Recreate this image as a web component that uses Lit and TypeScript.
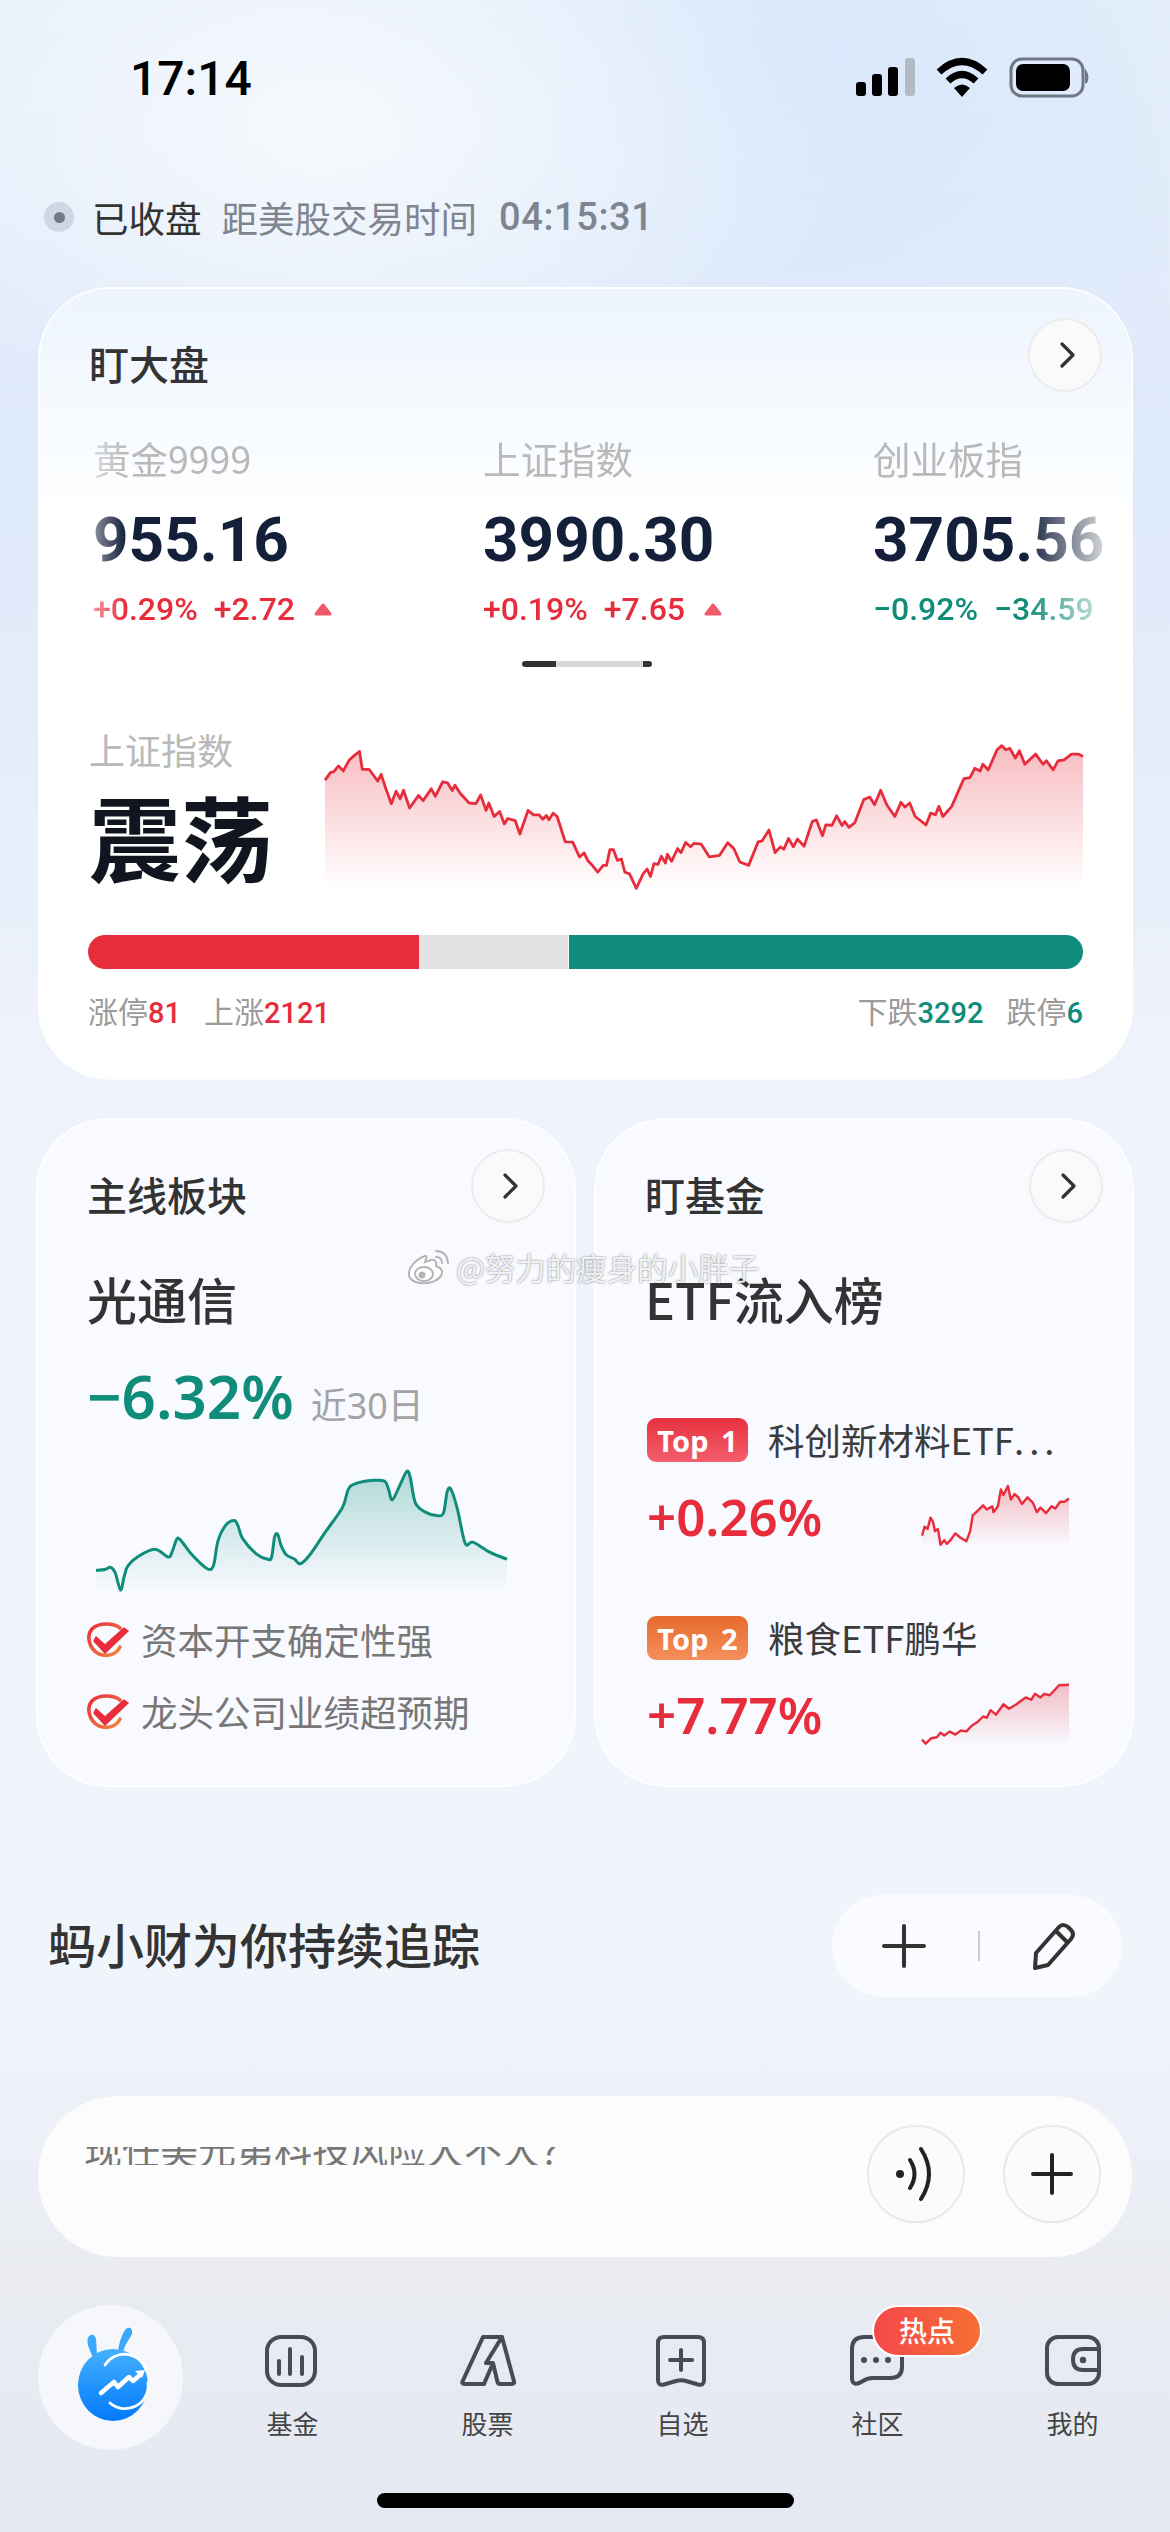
import { LitElement, html, css, svg } from 'lit';
import { customElement } from 'lit/decorators.js';

type Pt = number[];

// Chart traces, in the coordinates of a box [x, y, w, h]
const MAIN_BOX = [392, 78, 1120, 430];
const MAIN_LINE: Pt[] = [[392,182],[400,160],[405,157],[412,140],[419,155],[428,122],[436,108],[443,97],[447,150],[457,150],[470,185],[475,165],[482,208],[490,252],[497,215],[503,238],[508,212],[517,265],[530,228],[537,243],[549,208],[555,230],[566,187],[573,190],[580,213],[584,197],[592,222],[605,250],[615,252],[622,226],[630,272],[634,250],[642,290],[650,275],[657,312],[662,296],[673,302],[680,342],[692,272],[700,285],[708,285],[714,298],[719,287],[723,300],[729,280],[735,290],[747,365],[758,366],[768,410],[775,398],[780,420],[787,435],[795,455],[803,435],[808,435],[813,388],[818,388],[824,420],[830,416],[835,455],[842,460],[852,503],[862,460],[868,446],[873,468],[878,430],[884,432],[889,408],[895,428],[898,402],[904,423],[913,385],[918,397],[925,367],[932,380],[937,370],[948,372],[960,410],[975,405],[987,368],[996,385],[1005,425],[1018,435],[1032,365],[1038,362],[1048,330],[1057,397],[1065,380],[1070,387],[1077,355],[1084,380],[1090,357],[1100,378],[1112,305],[1118,300],[1127,347],[1132,315],[1141,316],[1148,288],[1156,317],[1160,305],[1166,322],[1175,308],[1188,240],[1197,232],[1204,255],[1213,212],[1222,255],[1234,290],[1243,248],[1249,262],[1256,250],[1264,290],[1280,315],[1287,280],[1294,285],[1299,260],[1305,290],[1318,260],[1330,205],[1336,178],[1345,175],[1352,147],[1360,155],[1364,135],[1372,152],[1385,92],[1392,80],[1398,92],[1404,88],[1412,117],[1418,95],[1426,135],[1442,105],[1453,135],[1458,125],[1468,152],[1475,125],[1484,122],[1495,105],[1505,105],[1512,112]];

const SECTOR_BOX = [252, 832, 1072, 273];
const SECTOR_LINE: Pt[] = [[252,1055],[275,1053],[290,1048],[302,1060],[316,1098],[325,1070],[335,1045],[360,1025],[405,1008],[440,1025],[450,1015],[463,985],[475,990],[500,1018],[540,1050],[558,1045],[570,990],[590,955],[612,944],[622,955],[635,985],[670,1018],[700,1030],[710,1025],[718,980],[726,975],[735,1000],[748,1020],[770,1030],[785,1040],[810,1020],[850,970],[895,915],[910,875],[930,862],[975,855],[1005,857],[1015,875],[1025,898],[1045,865],[1063,835],[1072,850],[1085,905],[1110,925],[1140,933],[1158,928],[1168,880],[1178,875],[1195,920],[1215,995],[1235,992],[1280,1015],[1324,1030]];

const ETF1_BOX = [895, 858, 397, 137];
const ETF1_LINE: Pt[] = [[895,970],[902,950],[910,955],[918,930],[925,940],[930,960],[938,955],[945,990],[955,980],[962,988],[972,980],[985,965],[1000,975],[1015,982],[1025,960],[1032,925],[1045,915],[1060,903],[1070,912],[1085,905],[1088,918],[1100,905],[1108,868],[1115,880],[1127,860],[1135,890],[1145,878],[1155,885],[1165,900],[1180,885],[1195,898],[1205,918],[1215,908],[1230,920],[1245,905],[1255,910],[1268,895],[1280,895],[1292,888]];

const ETF2_BOX = [895, 1298, 397, 137];
const ETF2_LINE: Pt[] = [[895,1423],[905,1432],[920,1420],[935,1418],[945,1408],[955,1414],[970,1405],[985,1412],[1000,1403],[1015,1405],[1030,1392],[1045,1384],[1060,1372],[1070,1375],[1080,1358],[1095,1368],[1115,1345],[1130,1355],[1150,1345],[1175,1330],[1190,1335],[1200,1322],[1215,1330],[1225,1322],[1240,1325],[1265,1303],[1292,1302]];

const RED = '#e72d3c';
const GREEN = '#0f8c7a';

function straight(pts: Pt[]) {
  return 'M' + pts.map((p) => p.join(' ')).join('L');
}

// catmull-rom, for the soft green line
function smooth(pts: Pt[]) {
  let d = `M${pts[0][0]} ${pts[0][1]}`;
  for (let i = 0; i < pts.length - 1; i++) {
    const a = pts[Math.max(i - 1, 0)];
    const b = pts[i];
    const c = pts[i + 1];
    const e = pts[Math.min(i + 2, pts.length - 1)];
    d += `C${b[0] + (c[0] - a[0]) / 6} ${b[1] + (c[1] - a[1]) / 6} ${c[0] - (e[0] - b[0]) / 6} ${c[1] - (e[1] - b[1]) / 6} ${c[0]} ${c[1]}`;
  }
  return d;
}

function chart(id: string, pts: Pt[], box: number[], color: string, width: number, soft = false, top = 0.3) {
  const line = soft ? smooth(pts) : straight(pts);
  const last = pts[pts.length - 1][0];
  const bottom = box[1] + box[3];
  const area = `${line}L${last} ${bottom}L${pts[0][0]} ${bottom}Z`;
  return html`<svg class="chart" viewBox=${box.join(' ')} preserveAspectRatio="none">
    <defs>
      <linearGradient id=${id} x1="0" y1="0" x2="0" y2="1">
        <stop offset="0" stop-color=${color} stop-opacity=${top}></stop>
        <stop offset="1" stop-color=${color} stop-opacity="0"></stop>
      </linearGradient>
    </defs>
    <path d=${area} fill="url(#${id})"></path>
    <path d=${line} fill="none" stroke=${color} stroke-width=${width} stroke-linejoin="round" vector-effect="non-scaling-stroke"></path>
  </svg>`;
}

const chevron = html`<span class="round-btn">
  <svg width="74" height="74" viewBox="0 0 74 74"><path d="M34 26 L45 37 L34 48" fill="none" stroke="#333" stroke-width="3.2" stroke-linecap="round" stroke-linejoin="round"/></svg>
</span>`;

const checkIcon = html`<svg class="check" width="42" height="36" viewBox="0 0 42 36">
  <defs>
    <linearGradient id="ring" x1="0" y1="0" x2="1" y2="1">
      <stop offset="0" stop-color="#e8303f"></stop>
      <stop offset="1" stop-color="#f5843c"></stop>
    </linearGradient>
  </defs>
  <path d="M33 6 C27 1 12 0 5 7 C-1 14 2 27 12 32 C20 35 29 33 33 25" fill="none" stroke="url(#ring)" stroke-width="3.6" stroke-linecap="round"/>
  <path d="M9 15 L18 23 L37 6 L41 9 L18 31 L7 19 Z" fill="#e72d3c" stroke="#e72d3c" stroke-width="1.5" stroke-linejoin="round"/>
</svg>`;

const tabIcons = {
  fund: svg`<rect x="2" y="2" width="48" height="48" rx="14"/><path d="M14 26V39M25 14V39M37 22V39"/>`,
  stock: svg`<path d="M23 2H42L54 46.5Q54.5 49 52 49H40.5Q38 49 37.5 47L33 28L24 49H4.5Q1.5 49 2.5 46.5ZM42 2L26 28H33"/>`,
  watch: svg`<path d="M9 2H43Q49 2 49 8V45Q49 51 43 49.5L31 46Q26 44.5 21 46L9 49.5Q3 51 3 45V8Q3 2 9 2ZM26 15V35M15 25H37"/>`,
  mine: svg`<rect x="2" y="2" width="52" height="47" rx="11"/><path d="M54 14H38Q28 14 28 24.5Q28 35 38 35H54"/>`,
};

const tabs = [
  { icon: tabIcons.fund, label: '基金' },
  { icon: tabIcons.stock, label: '股票' },
  { icon: tabIcons.watch, label: '自选' },
  { icon: svg`<path d="M14 2H40Q52 2 52 14V32Q52 43 40 43H23Q17 43 12 46.5Q3 52 2 44V14Q2 2 14 2Z"/><circle class="dot" cx="14" cy="25" r="3"/><circle class="dot" cx="26" cy="25" r="3"/><circle class="dot" cx="38" cy="25" r="3"/>`, label: '社区', badge: '热点' },
  { icon: svg`${tabIcons.mine}<circle class="dot" cx="38" cy="25" r="3.2"/>`, label: '我的' },
];

const indices = [
  { name: '黄金9999', value: '955.16', pct: '+0.29%', diff: '+2.72', up: true },
  { name: '上证指数', value: '3990.30', pct: '+0.19%', diff: '+7.65', up: true },
  { name: '创业板指', value: '3705.56', pct: '−0.92%', diff: '−34.59', up: false },
];

@customElement('app-root')
export class AppRoot extends LitElement {
  static styles = css`
    :host {
      display: block;
      position: relative;
      width: 1170px;
      height: 2532px;
      overflow: hidden;
      font-family: Roboto, 'Noto Sans CJK SC', sans-serif;
      color: #333;
      background:
        radial-gradient(520px 300px at 340px 130px, rgba(255, 255, 255, 0.7), rgba(255, 255, 255, 0)),
        radial-gradient(500px 380px at 780px 60px, rgba(214, 230, 250, 0.9), rgba(214, 230, 250, 0)),
        linear-gradient(180deg, #e6effb 0, #dee9fa 500px, #eff3fb 1100px, #f0f4fb 2000px, #e9ebf1 2290px, #e5e9f4 2532px);
    }

    /* status bar */
    .status {
      height: 156px;
      display: flex;
      align-items: center;
      justify-content: space-between;
      padding: 0 80px 0 130px;
      box-sizing: border-box;
    }
    .time {
      font-size: 48px;
      font-weight: 500;
      color: #000;
    }

    .market {
      height: 122px;
      margin-bottom: 9px;
      padding-left: 44px;
      display: flex;
      align-items: center;
      font-family: 'Noto Sans CJK SC', sans-serif;
      font-size: 36.5px;
      color: #7f8590;
      box-sizing: border-box;
    }
    .market-dot {
      width: 30px;
      height: 30px;
      border-radius: 50%;
      background: #ced8e4;
      display: flex;
      align-items: center;
      justify-content: center;
      margin-right: 18px;
    }
    .market-dot i {
      width: 11px;
      height: 11px;
      border-radius: 50%;
      background: #6f7886;
    }
    .market b {
      font-weight: 400;
      color: #333;
      margin-right: 20px;
    }
    .countdown {
      font-family: Roboto, sans-serif;
      font-size: 38px;
      font-weight: 500;
      margin-left: 22px;
      letter-spacing: 0.6px;
    }

    /* cards */
    .card {
      position: relative;
      box-sizing: border-box;
      border: 2px solid rgba(255, 255, 255, 0.75);
      border-radius: 72px;
    }
    .main-card {
      width: 1095px;
      height: 793px;
      margin-left: 38px;
      padding: 44px 48px 0 49px;
      background: linear-gradient(180deg, #edf4fd 0, #f7fbff 140px, #fff 230px);
    }
    .round-btn {
      position: absolute;
      top: 29px;
      right: 29px;
      width: 74px;
      height: 74px;
      border-radius: 50%;
      background: #fafafa;
      box-shadow: inset 0 0 0 2px #ececec;
      display: block;
    }
    .round-btn svg {
      display: block;
    }
    .card-title {
      font-family: 'Noto Sans CJK SC', sans-serif;
      font-size: 40px;
      font-weight: 500;
      line-height: 60px;
      color: #333;
    }

    .indices {
      display: flex;
      margin: 36px -32px 0 1px;
      padding: 4px 0 0 3px;
      overflow: hidden;
      -webkit-mask-image: linear-gradient(90deg, rgba(0, 0, 0, 0.45) 0, #000 36px, #000 calc(100% - 90px), rgba(0, 0, 0, 0.08) 100%);
      mask-image: linear-gradient(90deg, rgba(0, 0, 0, 0.45) 0, #000 36px, #000 calc(100% - 90px), rgba(0, 0, 0, 0.08) 100%);
    }
    .index {
      flex: none;
      width: 390px;
    }
    .index-name {
      font-family: 'Noto Sans CJK SC', sans-serif;
      font-size: 37.5px;
      line-height: 50px;
      color: #b9b9b9;
    }
    .index-value {
      margin-top: 22px;
      font-size: 62px;
      font-weight: 700;
      line-height: 70px;
      color: #14203a;
    }
    .index-change {
      margin-top: 14px;
      display: flex;
      align-items: center;
      gap: 16px;
      font-size: 32px;
      font-weight: 500;
      line-height: 40px;
    }
    .up {
      color: #e72d3c;
    }
    .down {
      color: #0f8c7a;
    }
    .tri {
      margin-left: 3px;
      display: block;
    }

    .pager {
      width: 130px;
      height: 6px;
      margin: 32px 0 0 433px;
      border-radius: 3px;
      background: linear-gradient(90deg, #333 0, #333 26%, #d8d8d8 26%, #d8d8d8 93%, #333 93%);
    }

    .mood {
      display: flex;
      margin-top: 57px;
    }
    .mood-text {
      width: 236px;
    }
    .mood-name {
      font-family: 'Noto Sans CJK SC', sans-serif;
      font-size: 36px;
      line-height: 50px;
      color: #b9b9b9;
    }
    .mood-word {
      margin-top: 11px;
      font-family: 'Noto Sans CJK SC', sans-serif;
      font-size: 92px;
      font-weight: 700;
      line-height: 100px;
      color: #10151f;
    }
    .chart {
      display: block;
      width: 100%;
      height: 100%;
      overflow: visible;
    }
    .mood-chart {
      width: 758px;
      height: 145px;
      margin-top: 21px;
    }

    .breadth {
      display: flex;
      height: 34px;
      margin: 45px 0 0 -1px;
      border-radius: 17px;
      overflow: hidden;
    }
    .breadth i {
      display: block;
      height: 100%;
    }
    .breadth-labels {
      margin: 21px 0 0 -1px;
      display: flex;
      justify-content: space-between;
      font-size: 30px;
      line-height: 40px;
      color: #9a9a9a;
    }
    .breadth-labels div {
      display: flex;
      gap: 23px;
    }
    .breadth-labels span {
      font-family: 'Noto Sans CJK SC', sans-serif;
    }
    .breadth-labels em {
      font-family: Roboto, sans-serif;
      font-size: 29px;
      font-style: normal;
      font-weight: 500;
    }

    .pair {
      display: grid;
      grid-template-columns: 540px 540px;
      column-gap: 18px;
      margin: 38px 0 0 36px;
    }
    .small-card {
      height: 669px;
      padding: 44px 0 0 49px;
      background: #f8faff;
    }
    .headline {
      margin-top: 39px;
      font-family: 'Noto Sans CJK SC', sans-serif;
      font-size: 50px;
      font-weight: 500;
      line-height: 70px;
      color: #333;
    }
    .sector-pct {
      display: flex;
      align-items: baseline;
      height: 70px;
      margin-top: 28px;
      font-family: 'Noto Sans', 'Noto Sans CJK SC', sans-serif;
      font-size: 60px;
      font-weight: 600;
      line-height: 70px;
      color: #0f8c7a;
    }
    .sector-pct small {
      margin-left: 17px;
      font-size: 36px;
      font-weight: 400;
      color: #a3a3a3;
    }
    .sector-chart {
      width: 411px;
      height: 123px;
      margin: 39px 0 0 9px;
    }
    .reasons {
      margin-top: 22px;
      display: flex;
      flex-direction: column;
      gap: 22px;
    }
    .reason {
      display: flex;
      align-items: center;
      gap: 12px;
      font-family: 'Noto Sans CJK SC', sans-serif;
      font-size: 36.5px;
      line-height: 50px;
      color: #777;
    }
    .check {
      flex: none;
    }

    .etf {
      margin: 85px 0 0 2px;
    }
    .etf + .etf {
      margin-top: 65px;
    }
    .etf-head {
      display: flex;
      align-items: center;
      gap: 20px;
      height: 44px;
    }
    .top-tag {
      width: 101px;
      height: 44px;
      border-radius: 9px;
      display: flex;
      align-items: center;
      justify-content: center;
      font-family: 'Noto Sans', sans-serif;
      font-size: 29px;
      font-weight: 700;
      word-spacing: 5px;
      color: #fff;
    }
    .top-red {
      background: linear-gradient(180deg, #e8303f, #f35f6c);
    }
    .top-orange {
      background: linear-gradient(180deg, #e66a2c, #f58f5c);
    }
    .etf-name {
      width: 300px;
      font-family: 'Noto Sans CJK SC', sans-serif;
      font-size: 36.5px;
      line-height: 44px;
      color: #3c3c3c;
      white-space: nowrap;
    }
    .etf-name i {
      font-style: normal;
      letter-spacing: 5px;
    }
    .etf-row {
      margin-top: 19px;
      display: flex;
      align-items: center;
      justify-content: space-between;
      width: 422px;
      height: 70px;
    }
    .etf-pct {
      font-family: 'Noto Sans', sans-serif;
      font-size: 51px;
      font-weight: 600;
      color: #e72d3c;
    }
    .etf-chart {
      width: 147px;
      height: 62px;
    }

    /* tracking header */
    .track {
      display: flex;
      align-items: center;
      justify-content: space-between;
      margin-top: 108px;
      padding: 0 48px 0 48px;
      height: 102px;
    }
    .track h2 {
      margin: 0;
      padding-bottom: 6px;
      font-family: 'Noto Sans CJK SC', sans-serif;
      font-size: 48px;
      font-weight: 500;
      color: #333;
    }
    .track-actions {
      width: 290px;
      height: 102px;
      box-sizing: border-box;
      border-radius: 51px;
      background: rgba(255, 255, 255, 0.65);
      display: flex;
      align-items: center;
      padding-left: 50px;
    }
    .track-sep {
      width: 2px;
      height: 30px;
      margin: 0 50px 0 52px;
      background: #c9ccd1;
    }

    /* composer */
    .composer {
      display: flex;
      align-items: flex-start;
      justify-content: space-between;
      box-sizing: border-box;
      width: 1094px;
      height: 161px;
      margin: 99px 0 0 38px;
      padding: 33px 31px 0 46px;
      border-radius: 80px;
      background: #fcfcfd;
    }
    .peek {
      height: 18px;
      margin-top: 18px;
      overflow: hidden;
      display: flex;
      align-items: flex-end;
      font-family: 'Noto Sans CJK SC', sans-serif;
      font-size: 38px;
      line-height: 40px;
      color: #777;
      white-space: nowrap;
    }
    .peek span {
      display: block;
      margin-bottom: -3px;
    }
    .composer-actions {
      display: flex;
      gap: 38px;
      margin-top: -4px;
    }
    .circle {
      width: 98px;
      height: 98px;
      box-sizing: border-box;
      border-radius: 50%;
      border: 2px solid #e9e9ea;
      background: #fbfbfb;
      display: flex;
      align-items: center;
      justify-content: center;
    }

    /* tab bar */
    .tabs {
      display: flex;
      margin-top: 48px;
      padding-left: 38px;
      height: 145px;
    }
    .home {
      flex: none;
      width: 145px;
      height: 145px;
      margin-right: 12px;
      border-radius: 50%;
      background: #f5f7fb;
    }
    .tab {
      position: relative;
      flex: none;
      width: 195px;
      padding-top: 30px;
      display: flex;
      flex-direction: column;
      align-items: center;
      font-family: 'Noto Sans CJK SC', sans-serif;
      font-size: 26px;
      line-height: 36px;
      color: #444;
    }
    .tab svg {
      display: block;
      height: 52px;
      margin-bottom: 18px;
      fill: none;
      stroke: #454b57;
      stroke-width: 4;
      stroke-linecap: round;
      stroke-linejoin: round;
    }
    .tab svg .dot {
      fill: #454b57;
      stroke: none;
    }
    .badge {
      position: absolute;
      top: 0;
      left: 92px;
      width: 110px;
      height: 52px;
      box-sizing: border-box;
      border: 2px solid #fff;
      border-radius: 26px;
      background: linear-gradient(90deg, #f6474a, #f56f33);
      color: #fff;
      font-size: 28px;
      font-weight: 500;
      line-height: 46px;
      text-align: center;
    }

    .home-bar {
      width: 417px;
      height: 15px;
      margin: 43px 0 0 377px;
      border-radius: 8px;
      background: #000;
    }

    /* image watermark laid over the cards */
    .watermark {
      position: absolute;
      left: 407px;
      top: 1246px;
      display: flex;
      align-items: center;
      gap: 5px;
      font-family: 'Noto Sans CJK SC', sans-serif;
      font-size: 30.5px;
      line-height: 42px;
      color: rgba(255, 255, 255, 0.9);
      text-shadow: 0 0 2px rgba(0, 0, 0, 0.55);
      white-space: nowrap;
    }
  `;

  private statusIcons() {
    return html`<svg width="234" height="44" viewBox="0 0 234 44">
      <rect x="0" y="26" width="10" height="14" rx="3" fill="#000"/>
      <rect x="16" y="18" width="10" height="22" rx="3" fill="#000"/>
      <rect x="32" y="11" width="10" height="29" rx="3" fill="#000"/>
      <rect x="49" y="2" width="10" height="38" rx="3" fill="#b4bac3"/>
      <path d="M83 16 Q106 -5 129 16" fill="none" stroke="#000" stroke-width="7"/>
      <path d="M92 25 Q106 12 120 25" fill="none" stroke="#000" stroke-width="7"/>
      <path d="M98 32 Q106 25 114 32 L106 41 Z" fill="#000"/>
      <rect x="155" y="3" width="72" height="37" rx="11" fill="none" stroke="#6f7784" stroke-width="3"/>
      <rect x="160" y="8" width="54" height="27" rx="7" fill="#000"/>
      <path d="M230 16 Q233 21 230 27 Z" fill="#6f7784" stroke="#6f7784" stroke-width="2"/>
    </svg>`;
  }

  private indexCell(item: (typeof indices)[number]) {
    const tone = item.up ? 'up' : 'down';
    const color = item.up ? '#f05a68' : '#4aa99a';
    return html`<div class="index">
      <div class="index-name">${item.name}</div>
      <div class="index-value">${item.value}</div>
      <div class="index-change ${tone}">
        <span>${item.pct}</span><span>${item.diff}</span>
        <svg class="tri" width="18" height="13" viewBox="0 0 18 13">
          <path d=${item.up ? 'M9 2 L16 11 H2 Z' : 'M2 2 H16 L9 11 Z'} fill=${color} stroke=${color} stroke-width="3" stroke-linejoin="round"/>
        </svg>
      </div>
    </div>`;
  }

  private homeLogo() {
    return html`<svg class="home" width="145" height="145" viewBox="0 0 145 145">
      <defs>
        <linearGradient id="ball" x1="0" y1="0" x2="0" y2="1">
          <stop offset="0" stop-color="#45b0ff"></stop>
          <stop offset="1" stop-color="#0279fb"></stop>
        </linearGradient>
      </defs>
      <path d="M57 56 C52 46 48 38 50 33 C52 28 57 29 58 34 C59 41 58 48 60 55 Z" fill="#3aa9fb"/>
      <path d="M80 47 C81 38 84 28 88 24 C92 21 95 24 94 29 C91 35 86 40 85 49 Z" fill="#3aa9fb"/>
      <ellipse cx="75" cy="80" rx="35" ry="36" fill="url(#ball)"/>
      <path d="M67 60 A23 23 0 0 1 108 64 M110 78 A23 23 0 0 1 72 98" fill="none" stroke="#fff" stroke-width="2.8" stroke-linecap="round"/>
      <path d="M63 88 L76 77 L80 82 L91 72 L95 76 L103 69" fill="none" stroke="#fff" stroke-width="4.5" stroke-linecap="round" stroke-linejoin="round"/>
      <path d="M97 66 L107 65 L104 73 Z" fill="#fff"/>
    </svg>`;
  }

  render() {
    return html`
      <div class="status">
        <span class="time">17:14</span>
        ${this.statusIcons()}
      </div>

      <div class="market">
        <span class="market-dot"><i></i></span>
        <b>已收盘</b>距美股交易时间
        <span class="countdown">04:15:31</span>
      </div>

      <section class="card main-card">
        ${chevron}
        <div class="card-title">盯大盘</div>
        <div class="indices">${indices.map((i) => this.indexCell(i))}</div>
        <div class="pager"></div>
        <div class="mood">
          <div class="mood-text">
            <div class="mood-name">上证指数</div>
            <div class="mood-word">震荡</div>
          </div>
          <div class="mood-chart">${chart('fillMain', MAIN_LINE, MAIN_BOX, RED, 2.8, false, 0.32)}</div>
        </div>
        <div class="breadth">
          <i style="width:331px;background:${RED}"></i>
          <i style="width:149px;background:#e2e2e2;border-right:1px solid #fff"></i>
          <i style="flex:1;background:#0f8c7c"></i>
        </div>
        <div class="breadth-labels">
          <div>
            <span>涨停<em class="up">81</em></span>
            <span>上涨<em class="up">2121</em></span>
          </div>
          <div>
            <span>下跌<em class="down">3292</em></span>
            <span>跌停<em class="down">6</em></span>
          </div>
        </div>
      </section>

      <div class="pair">
        <section class="card small-card">
          ${chevron}
          <div class="card-title">主线板块</div>
          <div class="headline">光通信</div>
          <div class="sector-pct">−6.32%<small>近30日</small></div>
          <div class="sector-chart">${chart('fillSector', SECTOR_LINE, SECTOR_BOX, GREEN, 3, true, 0.3)}</div>
          <div class="reasons">
            <div class="reason">${checkIcon}资本开支确定性强</div>
            <div class="reason">${checkIcon}龙头公司业绩超预期</div>
          </div>
        </section>

        <section class="card small-card">
          ${chevron}
          <div class="card-title">盯基金</div>
          <div class="headline">ETF流入榜</div>
          <div class="etf">
            <div class="etf-head">
              <span class="top-tag top-red">Top 1</span>
              <span class="etf-name">科创新材料ETF<i>...</i></span>
            </div>
            <div class="etf-row">
              <span class="etf-pct">+0.26%</span>
              <div class="etf-chart">${chart('fillEtfA', ETF1_LINE, ETF1_BOX, RED, 2.4, false, 0.3)}</div>
            </div>
          </div>
          <div class="etf">
            <div class="etf-head">
              <span class="top-tag top-orange">Top 2</span>
              <span class="etf-name">粮食ETF鹏华</span>
            </div>
            <div class="etf-row">
              <span class="etf-pct">+7.77%</span>
              <div class="etf-chart">${chart('fillEtfB', ETF2_LINE, ETF2_BOX, RED, 2.4, false, 0.3)}</div>
            </div>
          </div>
        </section>
      </div>

      <div class="track">
        <h2>蚂小财为你持续追踪</h2>
        <div class="track-actions">
          <svg width="44" height="44" viewBox="0 0 44 44"><path d="M22 2V42M2 22H42" stroke="#333" stroke-width="4" stroke-linecap="round"/></svg>
          <span class="track-sep"></span>
          <svg width="46" height="48" viewBox="0 0 46 48"><path d="M6 31 L29 5 Q33 1 38 5 L41 8 Q45 12 41 17 L18 43 L5 46 Z M26 9 L38 21" fill="none" stroke="#333" stroke-width="4" stroke-linejoin="round"/></svg>
        </div>
      </div>

      <div class="composer">
        <div class="peek"><span>现任美元第科技风险大不大？</span></div>
        <div class="composer-actions">
          <span class="circle">
            <svg width="44" height="56" viewBox="0 0 44 56" fill="none" stroke="#222" stroke-width="4" stroke-linecap="round">
              <circle cx="6" cy="28" r="4" fill="#222" stroke="none"/>
              <path d="M16 14 Q25 28 16 42"/>
              <path d="M27 3 Q43 28 27 53"/>
            </svg>
          </span>
          <span class="circle">
            <svg width="42" height="42" viewBox="0 0 42 42"><path d="M21 2V40M2 21H40" stroke="#222" stroke-width="4" stroke-linecap="round"/></svg>
          </span>
        </div>
      </div>

      <nav class="tabs">
        ${this.homeLogo()}
        ${tabs.map(
          (t) => html`<div class="tab">
            <svg width="56" height="52" viewBox="0 0 56 52">${t.icon}</svg>
            ${t.label}
            ${t.badge ? html`<span class="badge">${t.badge}</span>` : ''}
          </div>`
        )}
      </nav>

      <div class="home-bar"></div>

      <div class="watermark">
        <svg width="44" height="38" viewBox="0 0 44 38" fill="none" stroke="#b5b5b5" stroke-width="2">
          <path d="M18 8 C8 12 1 20 2 27 C3 34 13 36 20 35 C29 34 36 29 35 23 C34 19 30 19 29 18 C30 14 28 11 24 12 L18 14 C20 9 20 7 18 8 Z" fill="#fff"/>
          <ellipse cx="17" cy="26" rx="9" ry="7" fill="#fff"/>
          <circle cx="15" cy="27" r="2.5" fill="#b5b5b5"/>
          <path d="M29 3 Q40 3 41 15M29 9 Q35 9 35 15" stroke-linecap="round"/>
        </svg>
        <span>@努力的瘦身的小胖子</span>
      </div>
    `;
  }
}
